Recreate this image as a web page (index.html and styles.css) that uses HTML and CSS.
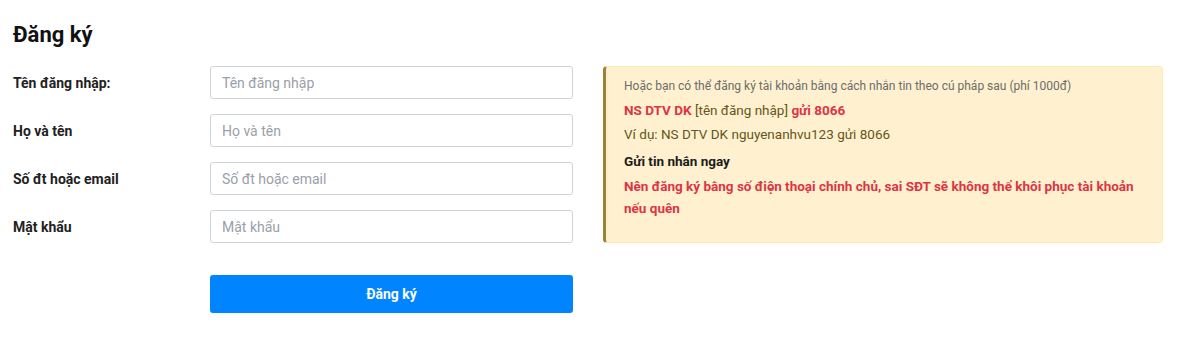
FILE: index.html
```html
<!DOCTYPE html>
<html lang="vi">
<head>
<meta charset="utf-8">
<title>Đăng ký</title>
<link rel="stylesheet" href="styles.css">
</head>
<body>
<div class="page">
  <h1 class="title">Đăng ký</h1>
  <div class="content">
    <form class="form">
      <div class="row"><label class="label">Tên đăng nhập:</label><input class="input" type="text" placeholder="Tên đăng nhập"></div>
      <div class="row"><label class="label">Họ và tên</label><input class="input" type="text" placeholder="Họ và tên"></div>
      <div class="row"><label class="label">Số đt hoặc email</label><input class="input" type="text" placeholder="Số đt hoặc email"></div>
      <div class="row"><label class="label">Mật khẩu</label><input class="input" type="password" placeholder="Mật khẩu"></div>
      <div class="row actions"><span class="label"></span><button class="btn" type="button">Đăng ký</button></div>
    </form>
    <div class="notice">
      <p class="note-intro">Hoặc bạn có thể đăng ký tài khoản bằng cách nhắn tin theo cú pháp sau (phí 1000đ)</p>
      <p class="note-line syntax"><b class="red">NS DTV DK</b> [tên đăng nhập] <b class="red">gửi 8066</b></p>
      <p class="note-line example">Ví dụ: NS DTV DK nguyenanhvu123 gửi 8066</p>
      <p class="note-line strong">Gửi tin nhắn ngay</p>
      <p class="note-warn">Nên đăng ký bằng số điện thoại chính chủ, sai SĐT sẽ không thể khôi phục tài khoản nếu quên</p>
    </div>
  </div>
</div>
</body>
</html>
```

FILE: styles.css
```css
* { box-sizing: border-box; }
html, body { margin: 0; padding: 0; background: #fff; }
body { font-family: Roboto, "Noto Sans", Arial, sans-serif; color: #212529; }
.page { padding: 20px 13px 0 13px; }
.title { margin: 0; font-size: 22px; font-weight: 700; line-height: 30px; color: #111; }
.content { display: flex; align-items: flex-start; gap: 30px; margin-top: 16px; }
.form { display: flex; flex-direction: column; gap: 15px; width: 560px; }
.row { display: flex; align-items: center; }
.label { width: 197px; flex: none; font-size: 14px; font-weight: 700; color: #222; }
.input { width: 363px; height: 33px; border: 1px solid #ced4da; border-radius: 3px; padding: 0 11px; font-family: inherit; font-size: 14px; color: #495057; background: #fff; outline: none; }
.input::placeholder { color: #9aa0a8; }
.actions { margin-top: 17px; }
.btn { width: 363px; height: 38px; border: none; border-radius: 3px; background: #0084ff; color: #fff; font-family: inherit; font-size: 14px; font-weight: 700; cursor: pointer; }
.notice { width: 560px; height: 177px; background: #fff1cf; border: 1px solid #ffeab0; border-left: 3px solid #9b8234; border-radius: 4px; padding: 11px 18px 0 18px; color: #6b5a2a; }
.notice p { margin: 0; }
.note-intro { font-size: 12px; line-height: 17px; color: #6c6c6c; }
.note-line { font-size: 13.5px; line-height: 18px; color: #665520; }
.syntax { margin-top: 6px !important; }
.example { margin-top: 6px !important; }
.strong { font-weight: 700; color: #1b1b1b; margin-top: 9px !important; }
.red { color: #dc3545; font-weight: 700; }
.note-warn { font-size: 13.5px; line-height: 22px; font-weight: 700; color: #dc3545; margin-top: 5px !important; }
```
